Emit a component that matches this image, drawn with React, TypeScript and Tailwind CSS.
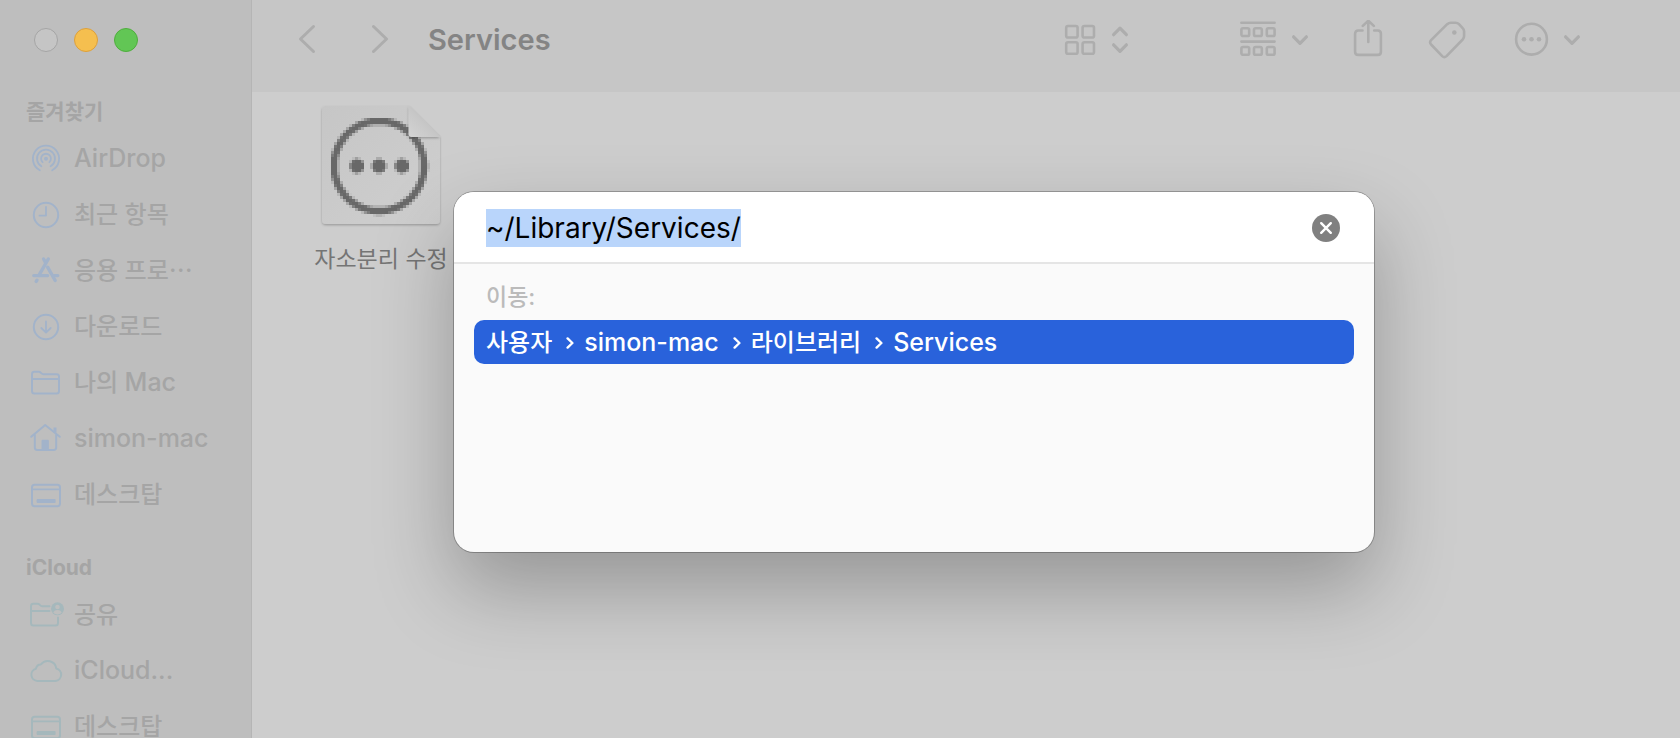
import React, { useEffect, useRef, useState } from "react";

const SANS = "font-['Inter','Noto_Sans_CJK_KR',sans-serif]";
const KOREAN = "font-['Noto_Sans_CJK_KR',sans-serif]";

type SidebarItem = {
  name: string;
  icon: React.ReactNode;
};

// Latin words run one step larger than the Korean around them
const Label = ({ text }: { text: string }) => (
  <span className="text-2xl font-medium whitespace-nowrap">
    {text.split(/([A-Za-z.-]+)/).map((part, i) =>
      i % 2 ? (
        <span key={i} className="text-[25px]">
          {part}
        </span>
      ) : (
        part
      )
    )}
  </span>
);

const Icon = ({ children }: { children: React.ReactNode }) => (
  <svg
    viewBox="0 0 36 36"
    className="h-9 w-9 shrink-0"
    fill="none"
    stroke="currentColor"
    strokeWidth="2"
    strokeLinecap="round"
    strokeLinejoin="round"
    aria-hidden="true"
  >
    {children}
  </svg>
);

const AirDropIcon = () => (
  <Icon>
    <circle cx="18" cy="17.8" r="2" fill="currentColor" stroke="none" />
    <path d="M14.6 21.2a4.9 4.9 0 1 1 6.8 0" strokeWidth="1.8" />
    <path d="M13.4 25.3a9 9 0 1 1 9.2 0" strokeWidth="1.8" />
    <path d="M11.8 29.3a13.1 13.1 0 1 1 12.4 0" strokeWidth="1.8" />
  </Icon>
);

const ClockIcon = () => (
  <Icon>
    <circle cx="18" cy="18" r="12.2" />
    <path d="M18 10v8.6h-6.6" strokeWidth="1.8" />
  </Icon>
);

const AppsIcon = () => (
  <Icon>
    <path d="M15.6 6l1.8 3.1M20.3 6l-9.4 16.4" strokeWidth="3.4" />
    <path d="M5.8 22.6h13.8M26.4 22.6h3.4" strokeWidth="3.4" />
    <path d="M19.6 14.2l7.6 13.3" strokeWidth="3.4" />
    <path d="M9 27.2l-.8 1.2" strokeWidth="3.4" />
  </Icon>
);

const DownloadIcon = () => (
  <Icon>
    <circle cx="18" cy="18" r="12.2" />
    <path d="M18 12.3v11M13.3 19l4.7 4.6 4.7-4.6" strokeWidth="1.8" />
  </Icon>
);

const FolderIcon = () => (
  <Icon>
    <path d="M4 26V9.2Q4 6.8 6.4 6.8h4.3q1.2 0 2 .8l.8.8q.8.8 2 .8h13q2.5 0 2.5 2.4V26q0 2.6-2.5 2.6h-22Q4 28.6 4 26z" />
    <path d="M4 13.9h27" />
  </Icon>
);

const HomeIcon = () => (
  <Icon>
    <path d="M3.2 15.8L17.2 4l14.6 11.8" />
    <path d="M6.8 14v12.6q0 2.4 2.4 2.4h16.6q2.4 0 2.4-2.4V14" />
    <path d="M27 6.5v5" strokeWidth="3" strokeLinecap="butt" />
    <path d="M13.5 29v-9q0-1.2 1.2-1.2h5q1.2 0 1.2 1.2v9z" fill="currentColor" stroke="none" />
  </Icon>
);

const DesktopIcon = () => (
  <Icon>
    <rect x="4" y="7.8" width="28" height="21.4" rx="2.6" />
    <path d="M4 12.4h28" strokeWidth="1.8" />
    <rect x="8.6" y="22" width="19" height="4" rx="1" fill="currentColor" stroke="none" />
  </Icon>
);

const SharedIcon = () => (
  <Icon>
    <path d="M21.5 9.2h-7.2q-1.2 0-2-.8l-.8-.8q-.8-.8-2-.8H5.4Q3 6.8 3 9.2V26q0 2.6 2.5 2.6h22Q30 28.6 30 26v-5.500" />
    <path d="M3 13.9h18.5" />
    <circle cx="29.5" cy="11.8" r="6.5" fill="currentColor" stroke="none" />
    <circle cx="29.5" cy="10" r="2.3" fill="#bebebe" stroke="none" />
    <path d="M25.3 16.1q.6-3 4.2-3t4.2 3q-4.2 2.6-8.400 0z" fill="#bebebe" stroke="none" />
  </Icon>
);

const CloudIcon = () => (
  <Icon>
    <path d="M9.500 27.900h18a6.300 6.300 0 0 0 .8-12.400A8.600 8.600 0 0 0 12.900 11.400 5 5 0 0 0 8 15.700a6.200 6.200 0 0 0 1.500 12.200z" />
  </Icon>
);

const favorites: SidebarItem[] = [
  { name: "AirDrop", icon: <AirDropIcon /> },
  { name: "최근 항목", icon: <ClockIcon /> },
  { name: "응용 프로⋯", icon: <AppsIcon /> },
  { name: "다운로드", icon: <DownloadIcon /> },
  { name: "나의 Mac", icon: <FolderIcon /> },
  { name: "simon-mac", icon: <HomeIcon /> },
  { name: "데스크탑", icon: <DesktopIcon /> },
];

const cloudItems: SidebarItem[] = [
  { name: "공유", icon: <SharedIcon /> },
  { name: "iCloud...", icon: <CloudIcon /> },
  { name: "데스크탑", icon: <DesktopIcon /> },
];

const SidebarSection = ({
  title,
  items,
  iconColor,
}: {
  title: string;
  items: SidebarItem[];
  iconColor: string;
}) => (
  <section className="mb-[26px]">
    <h2 className="pl-[26px] text-[21px] leading-[38px] font-bold">{title}</h2>
    <ul>
      {items.map((item) => (
        <li key={item.name}>
          <a href="#" className="flex h-14 items-center gap-[10px] pl-7">
            <span className={iconColor}>{item.icon}</span>
            <Label text={item.name} />
          </a>
        </li>
      ))}
    </ul>
  </section>
);

const Sidebar = () => (
  <aside className="w-[252px] shrink-0 overflow-hidden border-r border-[#b5b5b5] bg-[#bebebe] text-[#a5a5a5]">
    <div className="flex h-[93px] gap-4 pt-7 pl-[34px]">
      <button aria-label="닫기" className="h-6 w-6 rounded-full border border-[#a5a5a5] bg-[#c5c5c5]" />
      <button aria-label="최소화" className="h-6 w-6 rounded-full border border-[#dda03c] bg-[#f5bf4f]" />
      <button aria-label="확대" className="h-6 w-6 rounded-full border border-[#4fae3d] bg-[#62c655]" />
    </div>
    <nav>
      <SidebarSection title="즐겨찾기" items={favorites} iconColor="text-[#a2b3ca]" />
      <SidebarSection title="iCloud" items={cloudItems} iconColor="text-[#a5b8bc]" />
    </nav>
  </aside>
);

// Toolbar glyphs all share a 40px tall box
const ToolIcon = ({ width, children }: { width: number; children: React.ReactNode }) => (
  <svg
    width={width}
    height="40"
    viewBox={`0 0 ${width} 40`}
    fill="none"
    stroke="currentColor"
    strokeWidth="2.6"
    strokeLinecap="round"
    strokeLinejoin="round"
    aria-hidden="true"
  >
    {children}
  </svg>
);

const ChevronDown = () => (
  <ToolIcon width={20}>
    <path d="M3.6 16.8l6.4 6.5 6.4-6.5" strokeWidth="3.2" />
  </ToolIcon>
);

const Toolbar = () => (
  <header className="flex h-[92px] items-center bg-[#c6c6c6] pr-[98px] pb-3 pl-11 text-[#adadad]">
    <div className="flex gap-14">
      <button aria-label="뒤로">
        <ToolIcon width={20}>
          <path d="M17.5 6.5L4.5 19l13 12.5" strokeWidth="3" />
        </ToolIcon>
      </button>
      <button aria-label="앞으로">
        <ToolIcon width={20}>
          <path d="M1.5 6.5l13 12.5-13 12.5" strokeWidth="3" />
        </ToolIcon>
      </button>
    </div>
    <h1 className="ml-9 text-[29px] leading-10 font-semibold text-[#848484]">Services</h1>
    <div className="ml-auto flex gap-[42px]">
      <button aria-label="보기" className="mr-[68px] flex gap-3">
        <ToolIcon width={34}>
          <rect x="2.2" y="6" width="11.4" height="11.5" rx="1.8" />
          <rect x="18.6" y="6" width="11.4" height="11.5" rx="1.8" />
          <rect x="2.2" y="22.3" width="11.4" height="11.5" rx="1.8" />
          <rect x="18.6" y="22.3" width="11.4" height="11.5" rx="1.8" />
        </ToolIcon>
        <ToolIcon width={20}>
          <path d="M3.6 14.7L10 8.2l6.4 6.5M3.6 24.8l6.4 6.5 6.4-6.5" strokeWidth="3.2" />
        </ToolIcon>
      </button>
      <button aria-label="그룹" className="flex gap-3">
        <ToolIcon width={38}>
          <path d="M1.4 2.7h33.2M1.4 21.6h33.2" />
          {[8.2, 27].map((y) =>
            [1.4, 14, 26.8].map((x) => (
              <rect key={`${x}-${y}`} x={x} y={y} width="7.8" height="7.8" rx="1.6" />
            ))
          )}
        </ToolIcon>
        <ChevronDown />
      </button>
      <button aria-label="공유">
        <ToolIcon width={34}>
          <path d="M8.700 10.500H6.300q-3.200 0-3.200 3.200v18q0 3.200 3.200 3.200H25.700q3.200 0 3.200-3.200v-18q0-3.200-3.200-3.200H22.200M8.700 10.500h1.800" />
          <path d="M16.300 22V1.500M10.800 5.900l5.500-5.200 5.500 5.200" />
        </ToolIcon>
      </button>
      <button aria-label="태그">
        <ToolIcon width={44}>
          <path d="M19.2 4.200q1.600-1.400 3.600-1.400h4.600q2.200 0 3.600 1.400l3.700 3.900q1.400 1.400 1.400 3.400v4.600q0 1.900-1.400 3.400L18.500 36.100q-2.200 2-4.300 0L3.100 24.500q-2-2.200 0-4.300z" />
          <circle cx="26.300" cy="12.500" r="2.300" fill="currentColor" stroke="none" />
        </ToolIcon>
      </button>
      <button aria-label="동작" className="flex gap-3">
        <ToolIcon width={36}>
          <circle cx="17.500" cy="19.200" r="15.400" />
          {[10, 17.5, 25].map((x) => (
            <circle key={x} cx={x} cy="19.200" r="2.300" fill="currentColor" stroke="none" />
          ))}
        </ToolIcon>
        <ChevronDown />
      </button>
    </div>
  </header>
);

// Low resolution document badge, every cell is 3x3
const CELL = 3;
const inBadge = (x: number, y: number) => {
  const r = Math.hypot(x - 48, y - 48);
  if (r > 41.5 && r < 48.6) return true;
  return [26, 48, 71].some((cx) => Math.hypot(x - cx, y - 48) < 7.2);
};

const badgeCells: { x: number; y: number; alpha: number }[] = [];
for (let row = 0; row < 33; row++) {
  for (let col = 0; col < 33; col++) {
    let hits = 0;
    for (let i = 0; i < 16; i++) {
      const px = col * CELL + ((i % 4) + 0.5) * 0.75;
      const py = row * CELL + (Math.floor(i / 4) + 0.5) * 0.75;
      if (inBadge(px, py)) hits++;
    }
    if (hits) badgeCells.push({ x: col * CELL, y: row * CELL, alpha: hits / 16 });
  }
}

const DocumentIcon = () => (
  <svg width="128" height="128" viewBox="0 0 128 128" aria-hidden="true">
    <defs>
      <linearGradient id="page" x1="0" y1="0" x2="1" y2="1">
        <stop offset="0" stopColor="#c6c6c6" />
        <stop offset="1" stopColor="#cfcfcf" />
      </linearGradient>
      <linearGradient id="fold" x1="0" y1="1" x2="0.5" y2="0.5">
        <stop offset="0" stopColor="#d4d4d4" />
        <stop offset="1" stopColor="#c6c6c6" />
      </linearGradient>
      <filter id="pageShadow" x="-10%" y="-10%" width="120%" height="120%">
        <feDropShadow dx="0" dy="1.2" stdDeviation="1.2" floodOpacity="0.25" />
      </filter>
      <clipPath id="pageClip">
        <path d="M4 2h88v31h32v95H4z" />
      </clipPath>
    </defs>
    <path
      d="M9 4h83l31 31v83q0 4-4 4H9q-4 0-4-4V8q0-4 4-4z"
      fill="url(#page)"
      filter="url(#pageShadow)"
    />
    <g clipPath="url(#pageClip)" fill="#686868" shapeRendering="crispEdges">
      {badgeCells.map((c) => (
        <rect
          key={`${c.x}-${c.y}`}
          x={c.x + 14}
          y={c.y + 16}
          width={CELL}
          height={CELL}
          fillOpacity={c.alpha}
        />
      ))}
    </g>
    <path d="M91.5 4v28q0 3 3 3H123z" fill="url(#fold)" filter="url(#pageShadow)" />
  </svg>
);

const path = ["사용자", "simon-mac", "라이브러리", "Services"];

const GoToFolder = () => {
  const [value, setValue] = useState("~/Library/Services/");
  const inputRef = useRef<HTMLInputElement>(null);

  useEffect(() => {
    inputRef.current?.focus();
    inputRef.current?.select();
  }, []);

  const handleClear = () => {
    setValue("");
    inputRef.current?.focus();
  };

  return (
    <div
      role="dialog"
      aria-label="폴더로 이동"
      className="absolute top-48 left-[454px] h-[360px] w-[920px] overflow-hidden rounded-[20px] bg-[#fafafa] shadow-[0_0_0_1px_rgba(0,0,0,0.25),0_36px_80px_rgba(0,0,0,0.27)]"
    >
      <div className="flex h-[72px] items-center bg-white pr-[34px] pl-8 shadow-[inset_0_-2px_0_#e5e5e5]">
        <input
          ref={inputRef}
          type="text"
          aria-label="폴더 경로"
          value={value}
          onChange={(e) => setValue(e.target.value)}
          className="h-[38px] min-w-0 flex-1 bg-transparent text-[28px] leading-[38px] text-black outline-none selection:bg-[#b9d5fb] selection:text-black"
        />
        <button
          onClick={handleClear}
          aria-label="지우기"
          className="flex h-7 w-7 items-center justify-center rounded-full bg-[#808080]"
        >
          <svg width="14" height="14" viewBox="0 0 14 14" stroke="white" strokeWidth="2.4" strokeLinecap="round">
            <path d="M2.2 2.2l9.6 9.6M11.8 2.2l-9.6 9.6" />
          </svg>
        </button>
      </div>
      <div className="px-5 pt-[14px]">
        <p className="pl-3 text-[23px] leading-[38px] font-medium text-[#bbbbbb]">이동:</p>
        <button className="mt-1 flex h-11 w-full items-center rounded-[10px] bg-[#2962db] pt-0.5 pl-3 text-white">
          {path.map((part, i) => (
            <React.Fragment key={part}>
              {i > 0 && (
                <svg
                  width="8"
                  height="14"
                  viewBox="0 0 8 14"
                  className="mr-[10px] ml-[14px]"
                  fill="none"
                  stroke="currentColor"
                  strokeWidth="2.4"
                  strokeLinecap="round"
                  strokeLinejoin="round"
                  aria-hidden="true"
                >
                  <path d="M1.6 2.4L6.4 7l-4.8 4.6" />
                </svg>
              )}
              <Label text={part} />
            </React.Fragment>
          ))}
        </button>
      </div>
    </div>
  );
};

const App = () => (
  <div lang="ko" className={`relative flex h-screen overflow-hidden bg-[#cdcdcd] ${SANS}`}>
    <Sidebar />
    <main className="min-w-0 flex-1">
      <Toolbar />
      <div className="px-12 pt-[10px]">
        <figure className="flex w-[162px] flex-col items-center">
          <DocumentIcon />
          <figcaption className={`mt-2 text-[23px] leading-[38px] whitespace-nowrap text-[#757575] ${KOREAN}`}>
            자소분리 수정
          </figcaption>
        </figure>
      </div>
    </main>
    <GoToFolder />
  </div>
);

export default App;
